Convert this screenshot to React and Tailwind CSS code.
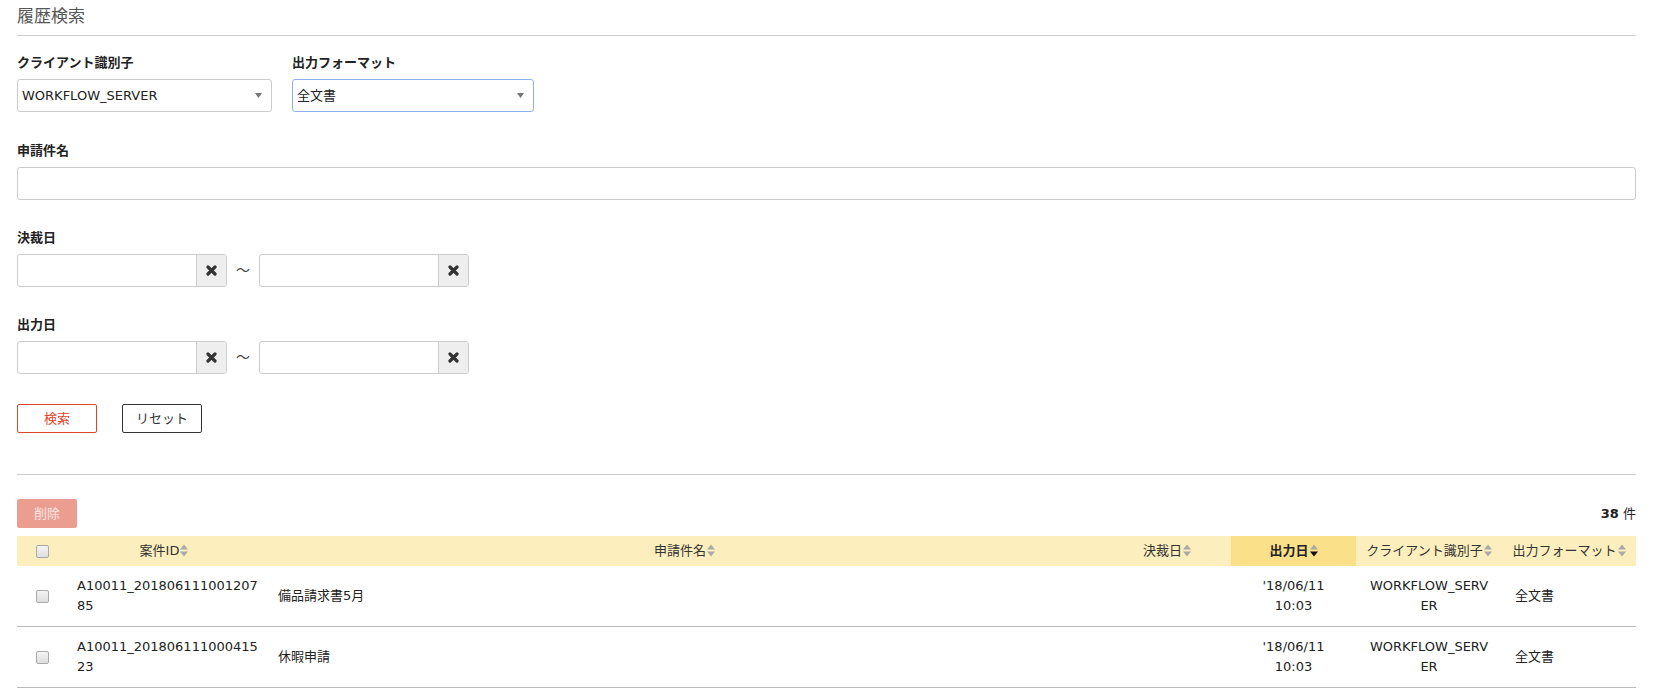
import React from 'react';

const SortIcon = ({ active = false }) => (
  <svg width="8" height="13" viewBox="0 0 8 13" className="inline-block ml-[1px] align-[-2px]">
    <path d="M0 5.5 L4 0.5 L8 5.5 Z" fill="#aaaaaa" />
    <path d="M0 7.5 L8 7.5 L4 12.5 Z" fill={active ? '#111111' : '#aaaaaa'} />
  </svg>
);

const ClearIcon = () => (
  <svg width="11" height="11" viewBox="0 0 11 11">
    <path d="M2 2 L9 9 M9 2 L2 9" stroke="#333333" strokeWidth="3.2" strokeLinecap="round" />
  </svg>
);

const Label = ({ children }) => (
  <div className="font-bold text-[13px] leading-[18px] text-[#222] mb-[7px]">{children}</div>
);

const FakeSelect = ({ value, width, focused = false }) => (
  <div
    className={`flex items-center justify-between h-[33px] rounded-[3px] bg-white pl-[4px] pr-[9px] border ${
      focused ? 'border-[#8fb0f0]' : 'border-[#cccccc]'
    } ${width}`}
  >
    <span className="text-[13px] text-[#222]">{value}</span>
    <svg width="7" height="5" viewBox="0 0 7 5">
      <path d="M0 0 L7 0 L3.5 5 Z" fill="#777777" />
    </svg>
  </div>
);

const DateInput = () => (
  <div className="flex w-[210px] h-[33px] border border-[#cccccc] rounded-[3px] overflow-hidden bg-white">
    <input className="flex-1 min-w-0 px-2 outline-none" />
    <button className="w-[30px] flex items-center justify-center bg-[#eeeeee] border-l border-[#cccccc]">
      <ClearIcon />
    </button>
  </div>
);

const DateRange = () => (
  <div className="flex items-center">
    <DateInput />
    <span className="w-[32px] text-center text-[14px] text-[#444]">～</span>
    <DateInput />
  </div>
);

const rows = [
  { id: 'A10011_20180611100120785', name: '備品請求書5月', date: "'18/06/11 10:03", client: 'WORKFLOW_SERVER', format: '全文書' },
  { id: 'A10011_20180611100041523', name: '休暇申請', date: "'18/06/11 10:03", client: 'WORKFLOW_SERVER', format: '全文書' },
];

const Checkbox = () => (
  <span className="block w-[13px] h-[13px] rounded-[2px] border border-[#a9a9a9] bg-gradient-to-b from-[#f4f4f4] to-[#dedede]" />
);

export default function App() {
  return (
    <div className="min-h-screen bg-white pl-[17px] pr-[20px] pt-[4px] text-[13px] text-[#333] font-['DejaVu_Sans','Noto_Sans_CJK_JP',sans-serif]">
      <h1 className="text-[17px] leading-[24px] font-normal text-[#555]">履歴検索</h1>
      <div className="mt-[7px] border-t border-[#cccccc]" />

      {/* search form */}
      <div className="mt-[18px] flex gap-[20px]">
        <div>
          <Label>クライアント識別子</Label>
          <FakeSelect value="WORKFLOW_SERVER" width="w-[255px]" />
        </div>
        <div>
          <Label>出力フォーマット</Label>
          <FakeSelect value="全文書" width="w-[242px]" focused />
        </div>
      </div>

      <div className="mt-[30px]">
        <Label>申請件名</Label>
        <input className="block w-full h-[33px] border border-[#cccccc] rounded-[3px] px-2 outline-none" />
      </div>

      <div className="mt-[29px]">
        <Label>決裁日</Label>
        <DateRange />
      </div>

      <div className="mt-[29px]">
        <Label>出力日</Label>
        <DateRange />
      </div>

      <div className="mt-[30px] flex gap-[25px]">
        <button className="w-[80px] h-[29px] border border-[#e0452c] rounded-[2px] text-[#e0452c] text-[13px]">検索</button>
        <button className="w-[80px] h-[29px] border border-[#333333] rounded-[2px] text-[#333] text-[13px]">リセット</button>
      </div>

      <div className="mt-[41px] border-t border-[#cccccc]" />

      {/* results */}
      <div className="mt-[24px] flex items-center justify-between">
        <button className="w-[60px] h-[29px] rounded-[2px] bg-[#eb9d90] text-[#fde8e4] text-[13px]">削除</button>
        <div className="text-[13px] text-[#222]">
          <span className="font-bold">38</span> 件
        </div>
      </div>

      <table className="mt-[8px] w-full table-fixed border-collapse">
        <colgroup>
          <col className="w-[45px]" />
          <col className="w-[204px]" />
          <col />
          <col className="w-[128px]" />
          <col className="w-[125px]" />
          <col className="w-[146px]" />
          <col className="w-[134px]" />
        </colgroup>
        <thead>
          <tr className="h-[30px] bg-[#fdeebd] text-[13px] text-[#333]">
            <th className="pl-[19px] text-left font-normal">
              <Checkbox />
            </th>
            <th className="font-normal text-center">案件ID<SortIcon /></th>
            <th className="font-normal text-center">申請件名<SortIcon /></th>
            <th className="font-normal text-center">決裁日<SortIcon /></th>
            <th className="font-bold text-center bg-[#fbe08a] text-[#222]">出力日<SortIcon active /></th>
            <th className="font-normal text-center whitespace-nowrap">クライアント識別子<SortIcon /></th>
            <th className="font-normal text-center whitespace-nowrap">出力フォーマット<SortIcon /></th>
          </tr>
        </thead>
        <tbody>
          {rows.map((r) => (
            <tr key={r.id} className="border-b border-[#bbbbbb] text-[13px] leading-[20px] text-[#222]">
              <td className="pl-[19px] py-[10px] align-middle">
                <Checkbox />
              </td>
              <td className="pl-[15px] pr-[4px] py-[10px] break-all">{r.id}</td>
              <td className="pl-[12px] py-[10px]">{r.name}</td>
              <td className="py-[10px]"></td>
              <td className="px-[12px] py-[10px] text-center">{r.date}</td>
              <td className="px-[11px] py-[10px] text-center break-all">{r.client}</td>
              <td className="pl-[13px] py-[10px]">{r.format}</td>
            </tr>
          ))}
        </tbody>
      </table>
    </div>
  );
}
